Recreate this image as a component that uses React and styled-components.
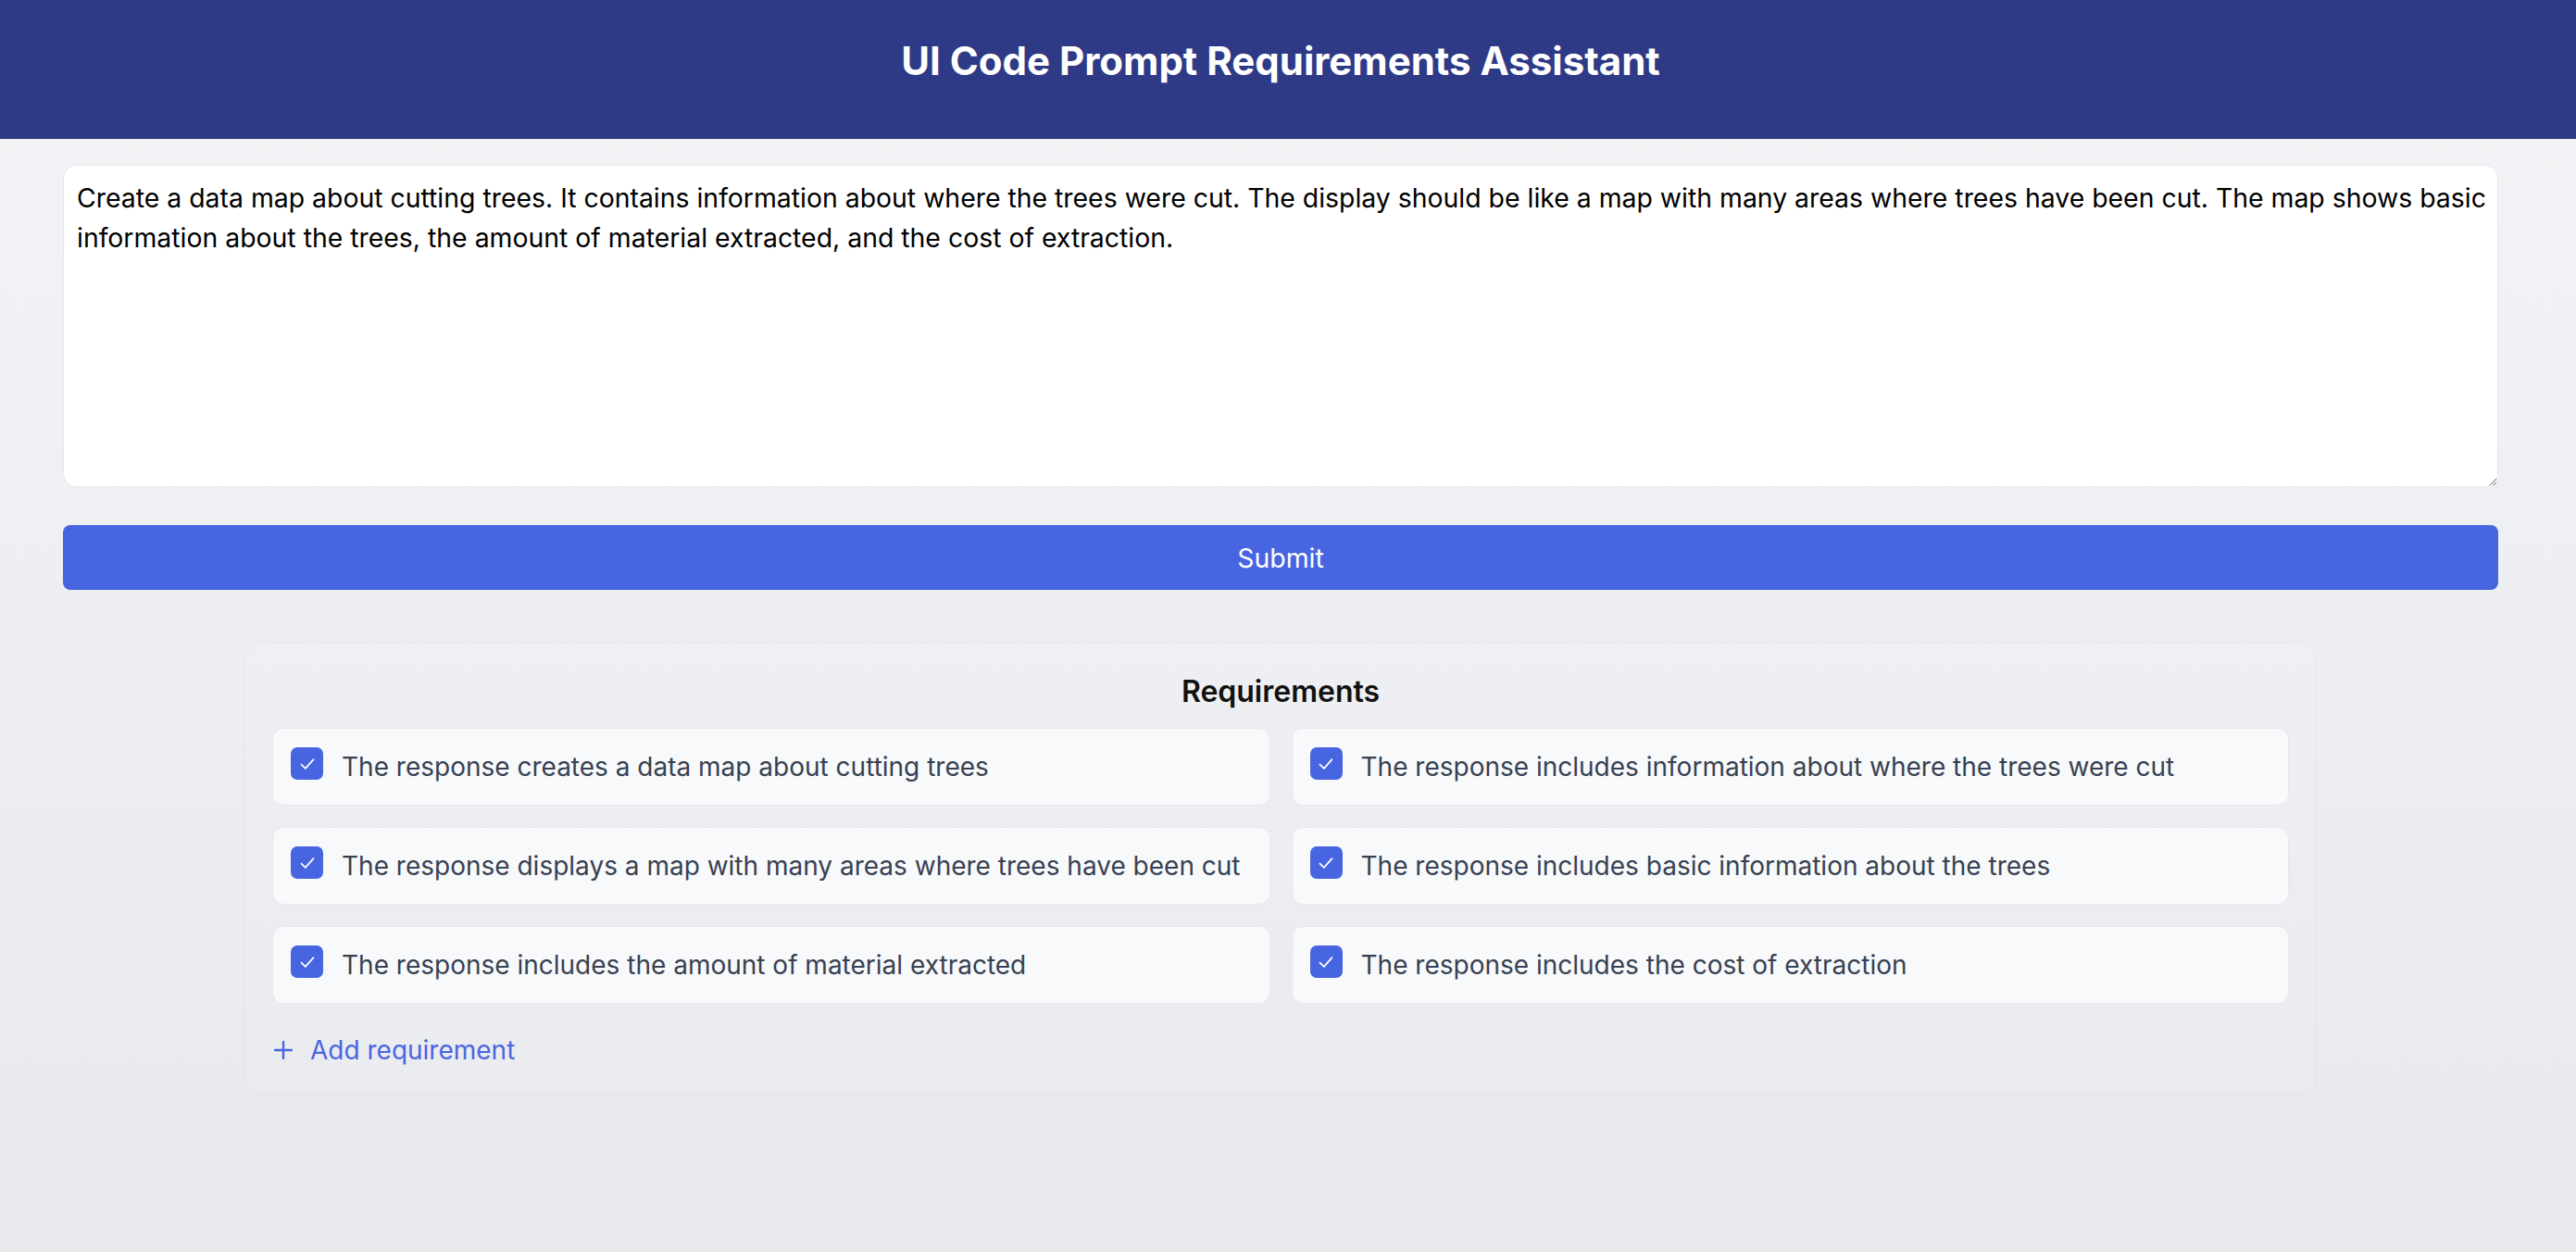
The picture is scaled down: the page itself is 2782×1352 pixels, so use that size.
import React, { useState } from 'react'
import styled, { createGlobalStyle } from 'styled-components'

const GlobalStyle = createGlobalStyle`
	* {
		box-sizing: border-box;
	}

	html,
	body,
	#root {
		margin: 0;
		min-height: 100%;
	}

	body {
		font-family: Inter, 'Noto Sans', 'Liberation Sans', sans-serif;
		background: linear-gradient(to bottom, #f3f4f6, #e8e9ed);
		min-height: 100vh;
	}
`

const initialPrompt =
	'Create a data map about cutting trees. It contains information about where the trees were cut. The display should be like a map with many areas where trees have been cut. The map shows basic information about the trees, the amount of material extracted, and the cost of extraction.'

const initialRequirements = [
	'The response creates a data map about cutting trees',
	'The response includes information about where the trees were cut',
	'The response displays a map with many areas where trees have been cut',
	'The response includes basic information about the trees',
	'The response includes the amount of material extracted',
	'The response includes the cost of extraction',
]

const CheckIcon = () => (
	<svg width="26" height="26" viewBox="0 0 24 24" fill="none">
		<polyline
			points="6 12.5 10 16.5 18 7.5"
			stroke="#ffffff"
			strokeWidth="1.6"
			strokeLinecap="round"
			strokeLinejoin="round"
		/>
	</svg>
)

const PlusIcon = () => (
	<svg width="20" height="20" viewBox="0 0 20 20" fill="none">
		<line x1="10" y1="1" x2="10" y2="19" stroke="#4a66e2" strokeWidth="2.4" strokeLinecap="round" />
		<line x1="1" y1="10" x2="19" y2="10" stroke="#4a66e2" strokeWidth="2.4" strokeLinecap="round" />
	</svg>
)

const App = () => {
	const [prompt, setPrompt] = useState(initialPrompt)
	const [requirements, setRequirements] = useState(
		initialRequirements.map((text) => ({ text, checked: true }))
	)

	const toggle = (index) => {
		setRequirements((list) =>
			list.map((item, i) => (i === index ? { ...item, checked: !item.checked } : item))
		)
	}

	return (
		<Page>
			<GlobalStyle />
			<Header>
				<Title>UI Code Prompt Requirements Assistant</Title>
			</Header>
			<Main>
				<PromptInput value={prompt} onChange={(e) => setPrompt(e.target.value)} />
				<SubmitButton type="button">Submit</SubmitButton>
				<Panel>
					<PanelTitle>Requirements</PanelTitle>
					<Grid>
						{requirements.map((item, i) => (
							<Card key={i} onClick={() => toggle(i)}>
								<Checkbox checked={item.checked}>{item.checked && <CheckIcon />}</Checkbox>
								<CardText>{item.text}</CardText>
							</Card>
						))}
					</Grid>
					<AddButton type="button">
						<PlusIcon />
						Add requirement
					</AddButton>
				</Panel>
			</Main>
		</Page>
	)
}

const Page = styled.div`
	min-height: 100vh;
	display: flex;
	flex-direction: column;
`

const Header = styled.header`
	background-color: #2e3a86;
	padding: 34px 16px 52px 0;
	text-align: center;
`

const Title = styled.h1`
	margin: 0;
	color: #ffffff;
	font-size: 42px;
	line-height: 64px;
	font-weight: 700;
`

const Main = styled.main`
	display: flex;
	flex-direction: column;
	padding: 28px 84px 40px 68px;
`

const PromptInput = styled.textarea`
	display: block;
	width: 100%;
	height: 348px;
	padding: 14px 3px 14px 14px;
	border: 1px solid #e5e7eb;
	border-radius: 14px;
	background: #ffffff;
	color: #000000;
	font-family: Inter, 'Noto Sans', sans-serif;
	font-size: 28.4px;
	line-height: 42.6px;
	outline: none;
`

const SubmitButton = styled.button`
	margin-top: 41px;
	height: 70px;
	border: none;
	border-radius: 8px;
	background-color: #4865e1;
	color: #ffffff;
	font-family: Inter, 'Noto Sans', sans-serif;
	font-size: 28.4px;
	cursor: pointer;
`

const Panel = styled.section`
	width: 100%;
	max-width: 2238px;
	margin: 56px auto 0;
	padding: 28px 29px 27px;
	border: 1px solid rgba(0, 0, 0, 0.035);
	border-radius: 18px;
	background: rgba(255, 255, 255, 0.08);
`

const PanelTitle = styled.h2`
	margin: 0 0 14px;
	text-align: center;
	color: #111111;
	font-size: 32px;
	line-height: 50px;
	font-weight: 600;
`

const Grid = styled.div`
	display: grid;
	grid-template-columns: 1fr 1fr;
	gap: 23px;
`

const Card = styled.div`
	display: flex;
	align-items: flex-start;
	gap: 20px;
	padding: 20px 20px 20px 19px;
	border: 1px solid #e6e8eb;
	border-radius: 12px;
	background-color: #f8f9fb;
	cursor: pointer;
`

const Checkbox = styled.span`
	flex-shrink: 0;
	width: 35px;
	height: 35px;
	display: flex;
	align-items: center;
	justify-content: center;
	border-radius: 7px;
	background-color: ${({ checked }) => (checked ? '#4865e1' : '#ffffff')};
	border: ${({ checked }) => (checked ? 'none' : '2px solid #c3c8d1')};
`

const CardText = styled.span`
	color: #374151;
	font-size: 28px;
	line-height: 42px;
`

const AddButton = styled.button`
	margin-top: 29px;
	display: flex;
	align-items: center;
	gap: 19px;
	padding: 0 0 0 2px;
	border: none;
	background: none;
	color: #4a66e2;
	font-family: Inter, 'Noto Sans', sans-serif;
	font-size: 28px;
	line-height: 42px;
	cursor: pointer;
`

export default App
